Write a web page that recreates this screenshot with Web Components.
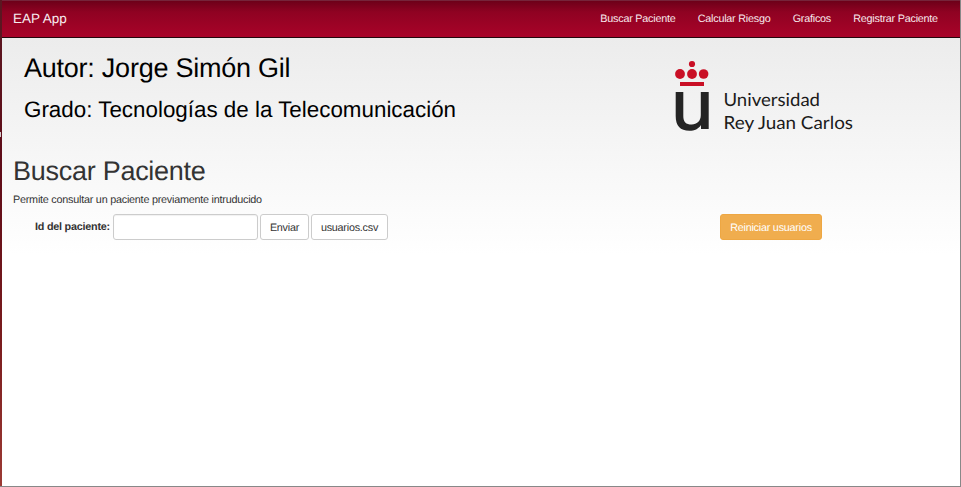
<!DOCTYPE html>
<html lang="es">
<head>
<meta charset="utf-8">
<title>EAP App</title>
<style>
html,body{margin:0;height:100%;overflow:hidden}
body{font:10.8px/15px "Liberation Sans",Arial,sans-serif;letter-spacing:-.23px;color:#333;text-rendering:geometricPrecision}
</style>
</head>
<body>
<eap-page>
  <eap-navbar slot="nav">
    <nav-link>Buscar Paciente</nav-link><nav-link>Calcular Riesgo</nav-link><nav-link>Graficos</nav-link><nav-link>Registrar Paciente</nav-link>
  </eap-navbar>
  <eap-header></eap-header>
  <patient-search></patient-search>
</eap-page>
<script>
const define = (name, html) => customElements.define(name, class extends HTMLElement {
  constructor() {
    super();
    this.attachShadow({mode: 'open'}).innerHTML = html;
  }
});

define('eap-page', `<style>
:host{display:grid;grid-template-columns:2px 1fr 1px;grid-template-rows:1fr 1px;height:100vh;background:#888}
.edge{background:linear-gradient(#5a1822 0,#5f0c18 35%,#7a1c1e 70%,#9c3a34);position:relative}
.edge::after{content:"";position:absolute;left:0;top:132px;width:1px;height:5px;background:#d5cccd}
main{background:linear-gradient(#eaeaea 0,#ececec 38px,#fff 255px)}
</style><div class="edge"></div><main><slot name="nav"></slot><slot></slot></main>`);

define('eap-navbar', `<style>
:host{display:flex;box-sizing:border-box;height:38px;padding:0 11px;justify-content:space-between;align-items:center;color:#f5e3e8;border-top:1px solid #76243a;border-bottom:1px solid #26060d;background:linear-gradient(#6d0019 0,#8f0222 11px,#a90329 100%)}
.brand{font-size:13.5px;letter-spacing:0;margin-top:-2px;color:#fff;opacity:.93}
nav{display:flex}
</style><span class="brand">EAP App</span><nav><slot></slot></nav>`);

define('nav-link', `<style>:host{display:block;padding:0 11.1px;color:#f8e8ec}</style><slot></slot>`);

define('eap-header', `<style>
:host{display:flex;justify-content:space-between;height:106px;color:#000;padding:0 104px 0 22px}
h1{font-weight:400;font-size:27px;letter-spacing:-.24px;line-height:30px;margin:15px 0 0}
h2{font-weight:400;font-size:22.38px;letter-spacing:0;line-height:26px;margin:14px 0 0}
svg{display:block;margin-top:20px;letter-spacing:0}
</style><div><h1>Autor: Jorge Simón Gil</h1><h2>Grado: Tecnologías de la Telecomunicación</h2></div>
<svg width="184" height="80" viewBox="672 58 184 80">
<g fill="#c90f25"><circle cx="692" cy="64" r="3.1"/><circle cx="680" cy="74" r="4.9"/><circle cx="692" cy="74" r="4.9"/><circle cx="703.6" cy="74" r="4.8"/><path d="M680 82h24v4h-24z"/></g>
<path fill="#242424" d="M675.700 92h7.600v24c0 6 2.500 8.500 8.500 8.500 5 0 9-3.500 9-9.500V92h7.900v37H701v-4c-2.500 4-6.500 5.800-11.500 5.800-9.300 0-13.800-5-13.800-14.500z"/>
<g font-family="Lato, sans-serif" font-size="18" fill="#1b1b1b"><text x="723.500" y="106" textLength="96.500" lengthAdjust="spacingAndGlyphs">Universidad</text><text x="723.500" y="129" textLength="129.500" lengthAdjust="spacingAndGlyphs">Rey Juan Carlos</text></g>
</svg>`);

define('patient-search', `<style>
:host{display:block;padding:0 11px}
h1{font-weight:400;font-size:27px;letter-spacing:-.27px;line-height:30px;margin:12px 0 0}
p{margin:6px 0 0;line-height:16px}
.row{display:flex;height:26px;margin:6px 127px 0 22px}
label{font-weight:700;line-height:26px;width:76px;margin-right:2px;white-space:nowrap}
input,button{box-sizing:border-box;height:26px;font:inherit;letter-spacing:inherit;border:1px solid #ccc;border-radius:3px;margin:0;padding:0;background:#fff;color:#333;text-rendering:inherit}
input{width:145px;box-shadow:inset 0 1px 1px rgba(0,0,0,.06);margin-right:2px}
.send{width:49px;margin-right:2px}.file{width:77px}
button{padding-top:2px}
.reset{width:102px;margin-left:auto;background:#f0ad4e;border-color:#eea743;color:#fff}
</style><h1>Buscar Paciente</h1><p>Permite consultar un paciente previamente intruducido</p>
<div class="row"><label for="id">Id del paciente:</label><input id="id"><button class="send">Enviar</button><button class="file">usuarios.csv</button><button class="reset">Reiniciar usuarios</button></div>`);
</script>
</body>
</html>
